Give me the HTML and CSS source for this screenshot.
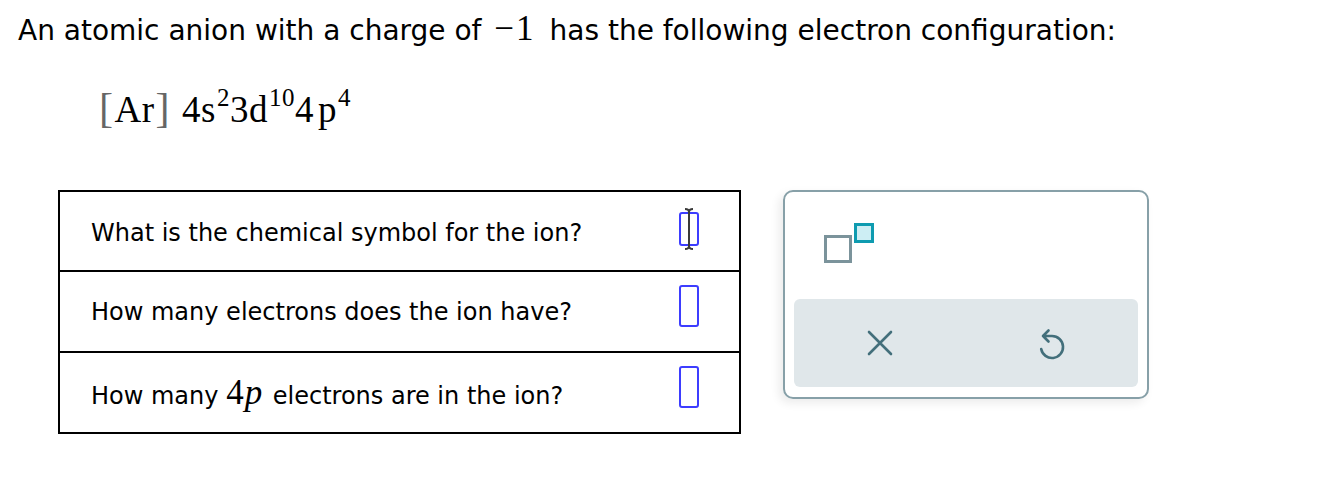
FILE: index.html
```html
<!DOCTYPE html>
<html>
<head>
<meta charset="utf-8">
<link rel="stylesheet" href="styles.css">
</head>
<body>
<div class="page">
  <p class="prompt">An atomic anion with a charge of <span class="math">−1</span> has the following electron configuration:</p>
  <div class="config">
    <span class="br">[</span><span class="el">Ar</span><span class="br">]</span><span class="sp"></span>4s<sup>2</sup>3d<sup>10</sup>4<span class="thin"></span>p<sup>4</sup>
  </div>
  <div class="work">
    <div class="qtable">
      <div class="qrow">
        <div class="qtext qtext-first">What is the chemical symbol for the ion?</div>
        <div class="qans">
          <div class="box box-focus">
            <svg class="ibeam" width="14" height="44" viewBox="0 0 14 44"><path d="M3 2 Q7 2 7 5 Q7 2 11 2 M7 5 V39 M3 42 Q7 42 7 39 Q7 42 11 42" fill="none" stroke="#3a3a3a" stroke-width="2"/></svg>
          </div>
        </div>
      </div>
      <div class="qrow">
        <div class="qtext">How many electrons does the ion have?</div>
        <div class="qans"><div class="box box-up"></div></div>
      </div>
      <div class="qrow">
        <div class="qtext">How many <span class="m4p">4<i>p</i></span> electrons are in the ion?</div>
        <div class="qans"><div class="box box-up"></div></div>
      </div>
    </div>
    <div class="panel">
      <div class="panel-top">
        <svg class="supicon" width="50" height="40" viewBox="0 0 50 40">
          <rect x="1.5" y="13.5" width="25" height="25" fill="#fff" stroke="#7b939b" stroke-width="3"/>
          <rect x="31.5" y="1.5" width="17" height="17" fill="#cdeef4" stroke="#0e9bb0" stroke-width="3"/>
        </svg>
      </div>
      <div class="panel-actions">
        <div class="act">
          <svg width="26" height="26" viewBox="0 0 26 26"><path d="M2 2 L24 24 M24 2 L2 24" fill="none" stroke="#436f7b" stroke-width="2.6" stroke-linecap="round"/></svg>
        </div>
        <div class="act">
          <svg width="28" height="34" viewBox="0 0 28 34"><path d="M5 10 H14 A11 11 0 1 1 3.2 23 M10.5 4.5 L5 10 L10.5 15.5" fill="none" stroke="#436f7b" stroke-width="2.6" stroke-linecap="round" stroke-linejoin="round"/></svg>
        </div>
      </div>
    </div>
  </div>
</div>
</body>
</html>
```

FILE: styles.css
```css
html, body {
  margin: 0;
  padding: 0;
  background: #fff;
}
body {
  font-family: "DejaVu Sans", Verdana, sans-serif;
  color: #000;
}
.page {
  width: 1320px;
}
.prompt {
  margin: 0;
  padding: 12px 0 0 18px;
  font-size: 28px;
  line-height: 34px;
  white-space: nowrap;
}
.math {
  font-family: "Liberation Serif", "Times New Roman", serif;
  font-size: 35px;
  margin: 0 5px 0 4px;
  letter-spacing: 2px;
}
.config {
  margin: 35px 0 0 99px;
  font-family: "Liberation Serif", "Times New Roman", serif;
  font-size: 37px;
  line-height: 50px;
  height: 50px;
  white-space: nowrap;
  letter-spacing: 0.5px;
}
.config .br {
  color: #666;
  font-size: 42px;
  font-weight: 300;
}
.config .el {
  margin: 0 1px;
}
.config .sp {
  display: inline-block;
  width: 12px;
}
.config .thin {
  display: inline-block;
  width: 4px;
}
.config sup {
  font-size: 25px;
  vertical-align: 0;
  position: relative;
  top: -16px;
  margin-left: 1px;
}
.work {
  display: flex;
  align-items: flex-start;
  gap: 42px;
  margin-top: 57px;
  padding-left: 58px;
}
.qtable {
  width: 679px;
  border: 2px solid #000;
}
.qrow {
  display: flex;
  align-items: center;
  height: 79px;
  border-bottom: 2px solid #000;
}
.qrow:last-child {
  border-bottom: none;
}
.qrow:first-child {
  height: 78px;
}
.qtext {
  flex: 1;
  padding-left: 31px;
  font-size: 24px;
  white-space: nowrap;
}
.qtext-first {
  padding-top: 3px;
}
.m4p {
  font-family: "Liberation Serif", "Times New Roman", serif;
  font-size: 35px;
  margin-right: 2px;
  letter-spacing: 1px;
}
.m4p i {
  font-style: italic;
}
.qans {
  width: 100px;
  display: flex;
  justify-content: center;
  align-self: stretch;
  align-items: center;
}
.box {
  width: 16px;
  height: 38px;
  border: 2px solid #3d3dff;
  border-radius: 3px;
  position: relative;
}
.box-focus {
  height: 30px;
  margin-bottom: 5px;
}
.box-up {
  margin-bottom: 12px;
}
.ibeam {
  position: absolute;
  left: 1px;
  top: -7px;
}
.panel {
  margin-top: 0;
  width: 366px;
  border: 2px solid #87a0a8;
  border-radius: 10px;
  padding: 0 9px 10px 9px;
  box-sizing: border-box;
  height: 209px;
  box-shadow: -4px 4px 10px rgba(0, 0, 0, 0.08);
  display: flex;
  flex-direction: column;
}
.panel-top {
  height: 107px;
  padding: 31px 0 0 30px;
  box-sizing: border-box;
}
.supicon {
  display: block;
}
.panel-actions {
  flex: 1;
  background: #e0e7ea;
  border-radius: 6px;
  display: grid;
  grid-template-columns: 1fr 1fr;
}
.act {
  display: flex;
  align-items: center;
  justify-content: center;
}
.act svg {
  display: block;
}
```
